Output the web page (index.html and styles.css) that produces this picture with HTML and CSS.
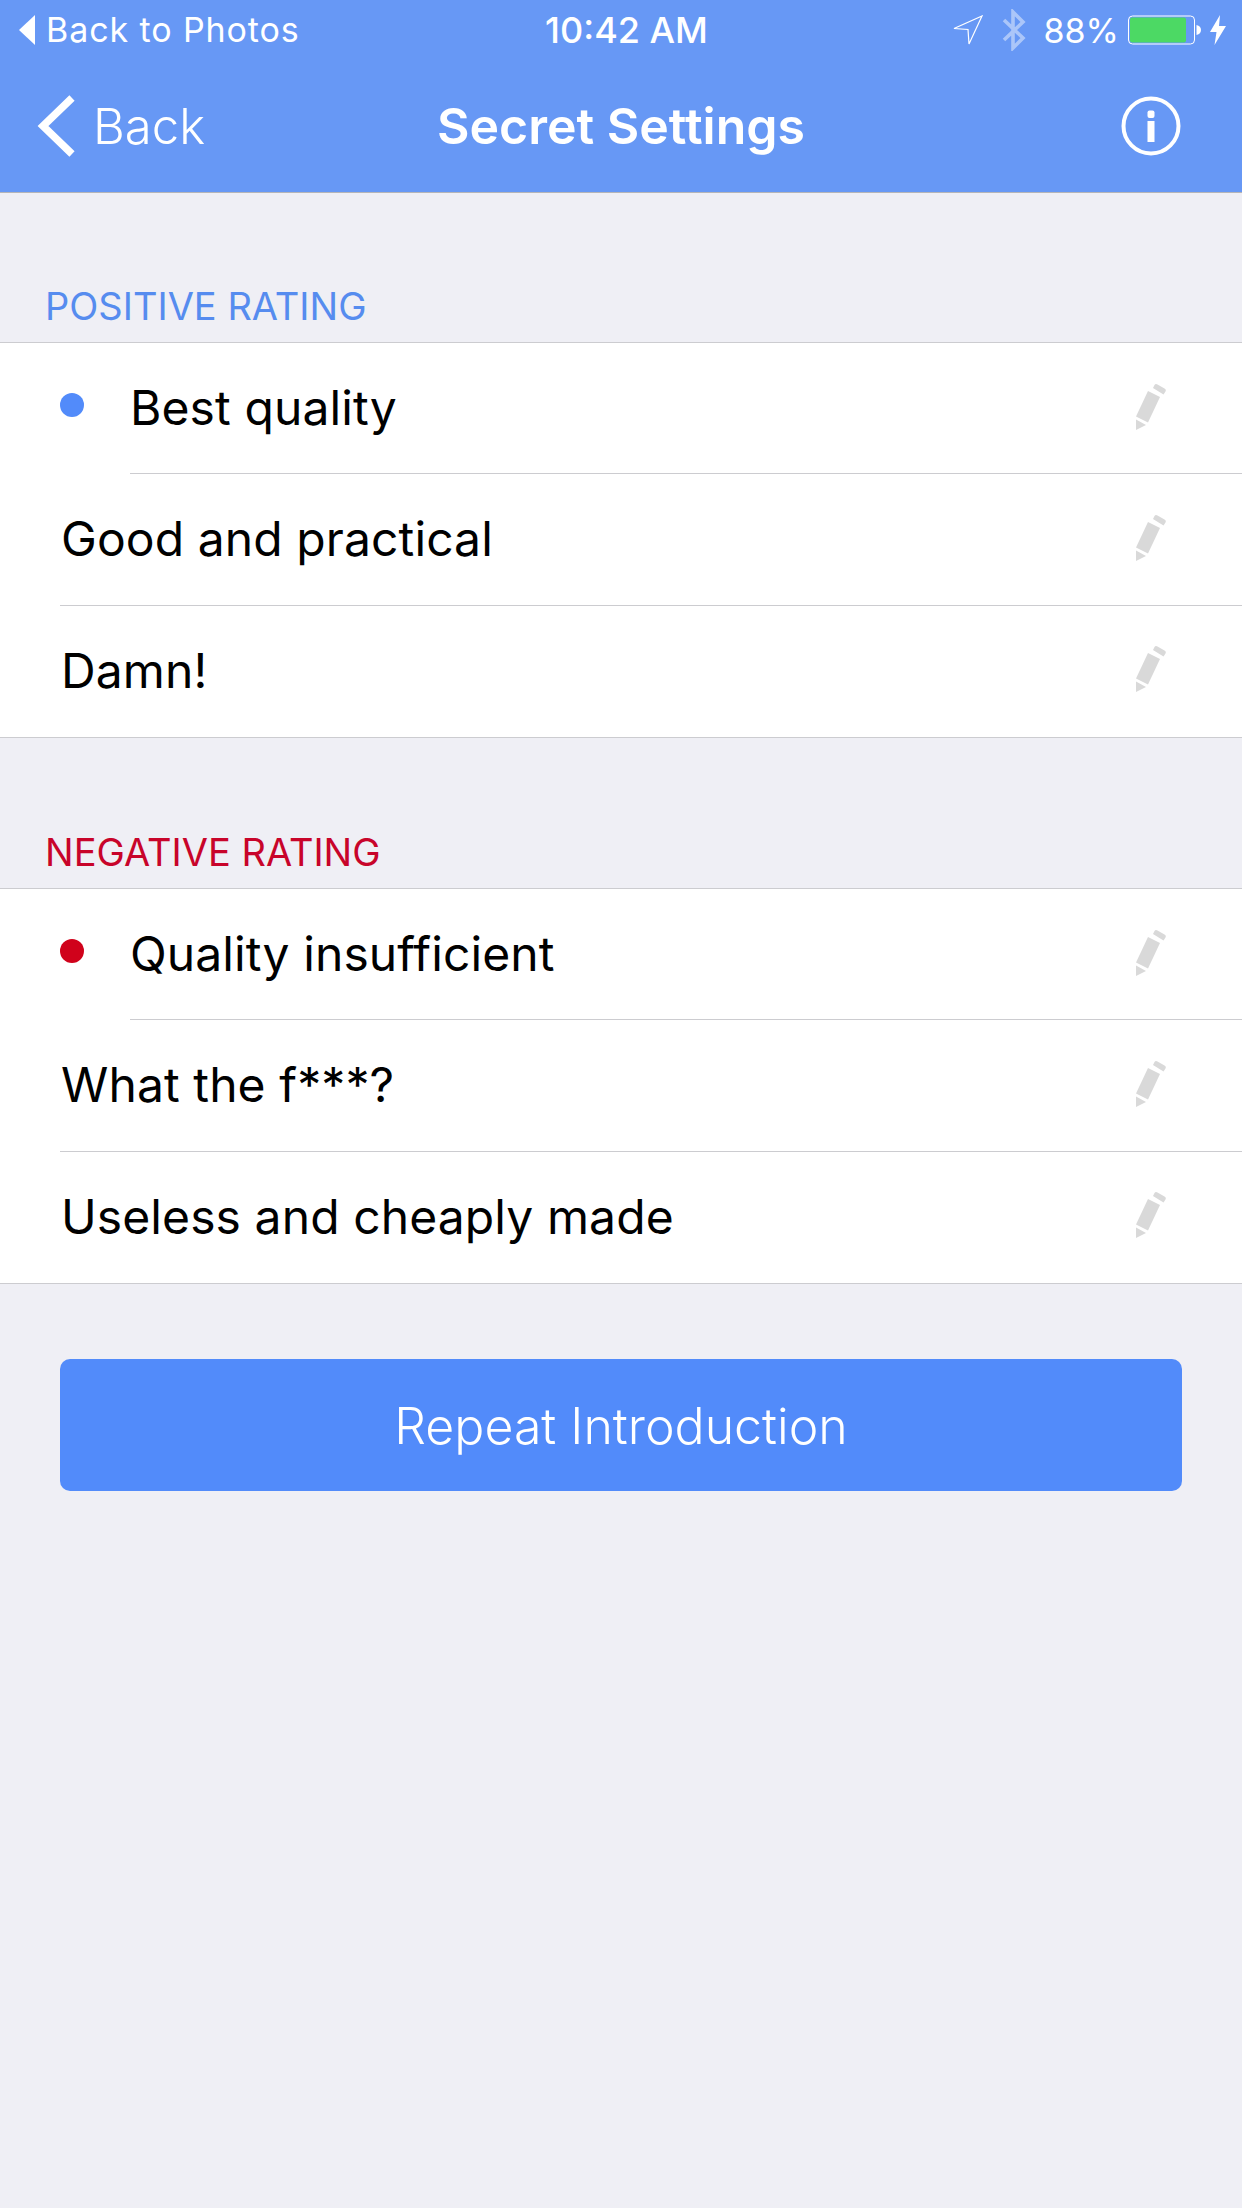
FILE: index.html
```html
<!DOCTYPE html>
<html lang="en">
<head>
<meta charset="utf-8">
<title>Secret Settings</title>
<link rel="stylesheet" href="styles.css">
</head>
<body>
<svg class="defs" width="0" height="0" aria-hidden="true">
  <symbol id="pencil" viewBox="0 0 30 46">
    <path d="M0 35.500 V46 L10 41 Z" fill="#d9d9d9"/>
    <path d="M0 32.500 L12 7 L24 13 L12 38.500 Z" fill="#d9d9d9"/>
    <path d="M17 4 L18.500 1 Q19.500 -0.500 21.500 0.500 L28.500 4.500 Q30.500 5.500 29.500 7.500 L27.500 10.500 Z" fill="#d9d9d9"/>
  </symbol>
</svg>
<header class="top">
  <div class="status">
    <div class="status-left">
      <svg class="back-tri" width="18" height="30" viewBox="0 0 18 30"><path d="M17 0 V30 L1 15 Z" fill="#fff"/></svg>
      <span class="status-back">Back to Photos</span>
    </div>
    <div class="status-time">10:42 AM</div>
    <div class="status-right">
      <svg class="loc" width="30" height="30" viewBox="0 0 30 30"><path d="M1 13.500 L29 1 L16 29 L15 14.500 Z" fill="none" stroke="#fff" stroke-width="1.200"/></svg>
      <svg class="bt" width="24" height="42" viewBox="0 0 24 42"><path d="M2 11 L21 29 L11 39 V3 L21 13 L2 31" fill="none" stroke="#fff" stroke-opacity=".45" stroke-width="3.600"/></svg>
      <span class="pct">88%</span>
      <svg class="batt" width="74" height="30" viewBox="0 0 74 30"><rect x=".5" y="1" width="66" height="28" rx="4" fill="none" stroke="#fff"/><rect x="2" y="2.500" width="56" height="25" rx="2" fill="#4cd964"/><path d="M68.500 10 Q73 11 73 15 Q73 19 68.500 20 Z" fill="#fff"/></svg>
      <svg class="bolt" width="16" height="30" viewBox="0 0 16 30"><path d="M10 0 L0 17 H6.500 L4.500 30 L16 11 H9 Z" fill="#fff"/></svg>
    </div>
  </div>
  <nav class="nav">
    <div class="nav-back">
      <svg width="40" height="64" viewBox="0 0 40 64"><path d="M36 4 L7 32 L36 60" fill="none" stroke="#fff" stroke-width="7.500"/></svg>
      <span>Back</span>
    </div>
    <h1 class="nav-title">Secret Settings</h1>
    <svg class="nav-info" width="60" height="60" viewBox="0 0 60 60"><circle cx="30" cy="30" r="27.500" fill="none" stroke="#fff" stroke-width="4"/><rect x="26.500" y="25" width="7" height="21" fill="#fff"/><rect x="26.500" y="14.500" width="7" height="7.500" rx="2" fill="#fff"/></svg>
  </nav>
</header>
<main>
  <h2 class="section-head head-pos">POSITIVE RATING</h2>
  <ul class="group">
    <li class="row selected"><i class="dot dot-pos"></i><span class="row-label">Best quality</span><svg class="pen" width="30" height="46"><use href="#pencil"/></svg></li>
    <li class="row"><span class="row-label">Good and practical</span><svg class="pen" width="30" height="46"><use href="#pencil"/></svg></li>
    <li class="row"><span class="row-label">Damn!</span><svg class="pen" width="30" height="46"><use href="#pencil"/></svg></li>
  </ul>
  <h2 class="section-head head-neg">NEGATIVE RATING</h2>
  <ul class="group">
    <li class="row selected"><i class="dot dot-neg"></i><span class="row-label">Quality insufficient</span><svg class="pen" width="30" height="46"><use href="#pencil"/></svg></li>
    <li class="row"><span class="row-label">What the f***?</span><svg class="pen" width="30" height="46"><use href="#pencil"/></svg></li>
    <li class="row"><span class="row-label">Useless and cheaply made</span><svg class="pen" width="30" height="46"><use href="#pencil"/></svg></li>
  </ul>
  <button class="cta" type="button">Repeat Introduction</button>
</main>
</body>
</html>
```
FILE: styles.css
```css
* { box-sizing: border-box; }
html, body { margin: 0; padding: 0; }
body {
  width: 1242px;
  min-height: 2208px;
  background: #efeff5;
  font-family: Inter, "Liberation Sans", sans-serif;
  color: #000;
  overflow: hidden;
}
.defs { position: absolute; }
.top {
  height: 193px;
  background: #6798f5;
  border-bottom: 1px solid #b5b5b8;
  color: #fff;
}
.status {
  height: 60px;
  display: grid;
  grid-template-columns: 1fr auto 1fr;
  align-items: center;
  padding: 0 16px 0 18px;
  font-size: 34px;
}
.status-left { display: flex; align-items: center; gap: 10px; letter-spacing: 0.9px; }
.status-back { padding-bottom: 2px; }
.status-time { font-weight: 500; font-size: 36px; margin-left: 9px; }
.status-right { display: flex; align-items: center; justify-content: flex-end; }
.loc { margin-right: 19px; }
.bt { margin-right: 18px; }
.pct { margin-right: 9px; }
.bolt { margin-left: 8px; }
.nav {
  height: 132px;
  display: grid;
  grid-template-columns: 1fr auto 1fr;
  align-items: center;
  padding: 0 61px 0 36px;
}
.nav-back { display: flex; align-items: center; gap: 17px; font-size: 49px; font-weight: 350; }
.nav-title { margin: 0 -25px 0 0; font-size: 50px; font-weight: 600; }
.nav-info { justify-self: end; }
.section-head {
  margin: 0;
  height: 149px;
  padding: 0 45px 14px;
  display: flex;
  align-items: flex-end;
  font-size: 38px;
  font-weight: 400;
  line-height: 44px;
}
.head-pos { color: #568cef; }
.head-neg { color: #c8042a; height: 150px; }
.group {
  list-style: none;
  margin: 0;
  padding: 0;
  height: 396px;
  display: grid;
  grid-auto-rows: 1fr;
  background: #fff;
  border-top: 1px solid #ccccd0;
  border-bottom: 1px solid #ccccd0;
}
.row {
  position: relative;
  display: flex;
  align-items: center;
  padding: 0 76px 2px 61px;
  font-size: 48px;
  letter-spacing: 0.1px;
}
.row + .row::before {
  content: "";
  position: absolute;
  top: -1px;
  left: 60px;
  right: 0;
  height: 1px;
  background: #ccccd0;
}
.selected { padding-left: 130px; }
.selected + .row::before { left: 130px; }
.row-label { flex: 1; }
.pen { margin-bottom: 2px; }
.dot {
  position: absolute;
  left: 60px;
  top: 50px;
  width: 24px;
  height: 24px;
  border-radius: 50%;
}
.dot-pos { background: #528bfa; }
.dot-neg { background: #d0021b; }
.cta {
  display: block;
  width: 1122px;
  height: 132px;
  margin: 75px 60px 0;
  padding: 2px 0 0;
  border: 0;
  border-radius: 10px;
  background: #528bfa;
  color: #fff;
  font: 350 50px Inter, "Liberation Sans", sans-serif;
}
```
